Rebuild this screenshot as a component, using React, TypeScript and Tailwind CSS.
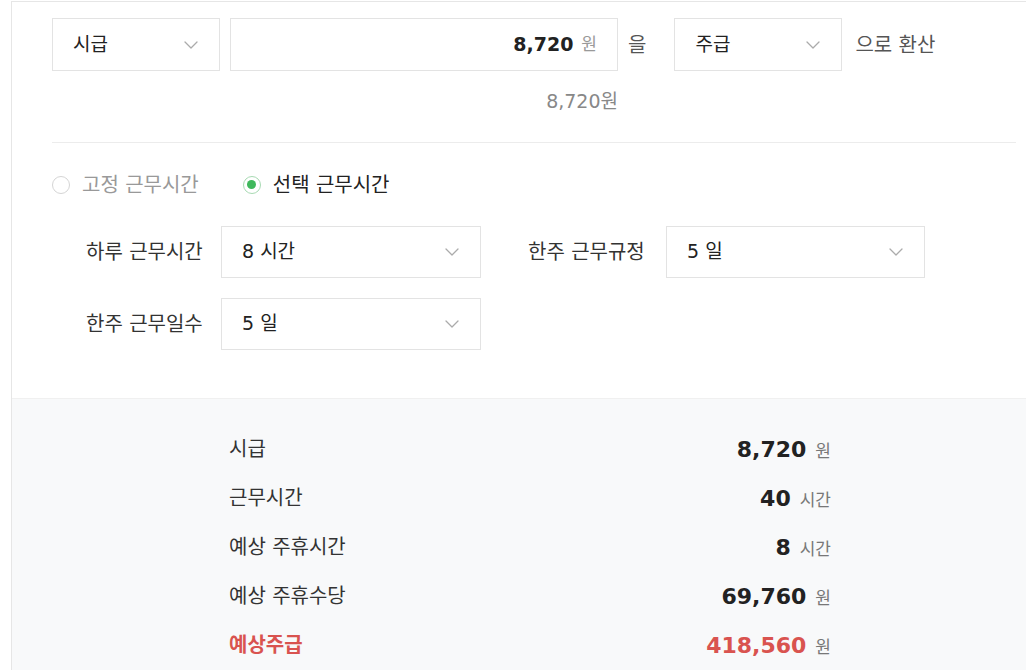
import { ChevronDown } from 'lucide-react';

const font = { fontFamily: '"DejaVu Sans", "Noto Sans CJK KR", sans-serif' };

function Select({ value, className }: { value: string; className: string }) {
  return (
    <div
      className={`flex items-center justify-between border border-[#e3e3e3] bg-white pl-5 pr-4 text-[19px] text-[#222] ${className}`}
    >
      <span>{value}</span>
      <ChevronDown className="w-6 h-6 text-[#ababab]" strokeWidth={1.3} />
    </div>
  );
}

const results = [
  { label: '시급', value: '8,720', unit: '원' },
  { label: '근무시간', value: '40', unit: '시간' },
  { label: '예상 주휴시간', value: '8', unit: '시간' },
  { label: '예상 주휴수당', value: '69,760', unit: '원' },
];

export default function App() {
  return (
    <div className="min-h-[670px] bg-white pt-px pl-[11px]" style={font}>
      <div className="border-l border-t border-[#e6e6e6] h-[669px] flex flex-col">
        {/* Converter */}
        <div className="pl-10 pt-4">
          <div className="flex items-center h-[53px]">
            <Select value="시급" className="w-[168px] h-[53px]" />
            <div className="ml-[10px] w-[388px] h-[53px] border border-[#e3e3e3] flex items-center justify-end pr-5">
              <span className="text-[19px] font-bold text-[#222]">8,720</span>
              <span className="ml-[8px] text-[17px] text-[#999]">원</span>
            </div>
            <span className="ml-[10px] text-[20px] text-[#555]">을</span>
            <Select value="주급" className="ml-[28px] w-[168px] h-[53px]" />
            <span className="ml-[13px] text-[20px] text-[#555]">으로 환산</span>
          </div>
          <div className="w-[566px] text-right text-[19px] text-[#888] mt-[16px]">8,720원</div>
          <div className="mt-[26px] mr-[10px] border-t border-[#ececec]" />
        </div>

        {/* Work hours */}
        <div className="pl-10 pt-[30px]">
          <div className="flex items-center h-6">
            <span className="w-[18px] h-[18px] rounded-full border border-[#d5d5d5] bg-white" />
            <span className="ml-3 text-[20px] text-[#999]">고정 근무시간</span>
            <span className="ml-[44px] w-[18px] h-[18px] rounded-full border border-[#a8dab3] flex items-center justify-center">
              <span className="w-[9px] h-[9px] rounded-full bg-[#3fb85c]" />
            </span>
            <span className="ml-3 text-[20px] text-[#222]">선택 근무시간</span>
          </div>

          <div className="mt-[29px] pl-[34px] flex flex-col gap-[20px]">
            <div className="flex items-center">
              <span className="w-[135px] text-[20px] text-[#333]">하루 근무시간</span>
              <Select value="8 시간" className="w-[260px] h-[52px]" />
              <span className="ml-[47px] w-[138px] text-[20px] text-[#333]">한주 근무규정</span>
              <Select value="5 일" className="w-[259px] h-[52px]" />
            </div>
            <div className="flex items-center">
              <span className="w-[135px] text-[20px] text-[#333]">한주 근무일수</span>
              <Select value="5 일" className="w-[260px] h-[52px]" />
            </div>
          </div>
        </div>

        {/* Results */}
        <div className="mt-[48px] flex-1 bg-[#f8f9fa] border-t border-[#f0f0f0] pt-[26px]">
          <div className="ml-[217px] w-[602px] flex flex-col">
            {results.map((r) => (
              <div key={r.label} className="flex items-center justify-between h-[49px]">
                <span className="text-[20px] text-[#333]">{r.label}</span>
                <span className="flex items-baseline">
                  <span className="text-[22px] font-bold text-[#222]">{r.value}</span>
                  <span className="ml-[9px] text-[17px] text-[#777]">{r.unit}</span>
                </span>
              </div>
            ))}
            <div className="flex items-center justify-between h-[49px]">
              <span className="text-[20px] font-bold text-[#d9534f]">예상주급</span>
              <span className="flex items-baseline">
                <span className="text-[22px] font-bold text-[#d9534f]">418,560</span>
                <span className="ml-[9px] text-[17px] text-[#777]">원</span>
              </span>
            </div>
          </div>
        </div>
      </div>
    </div>
  );
}
